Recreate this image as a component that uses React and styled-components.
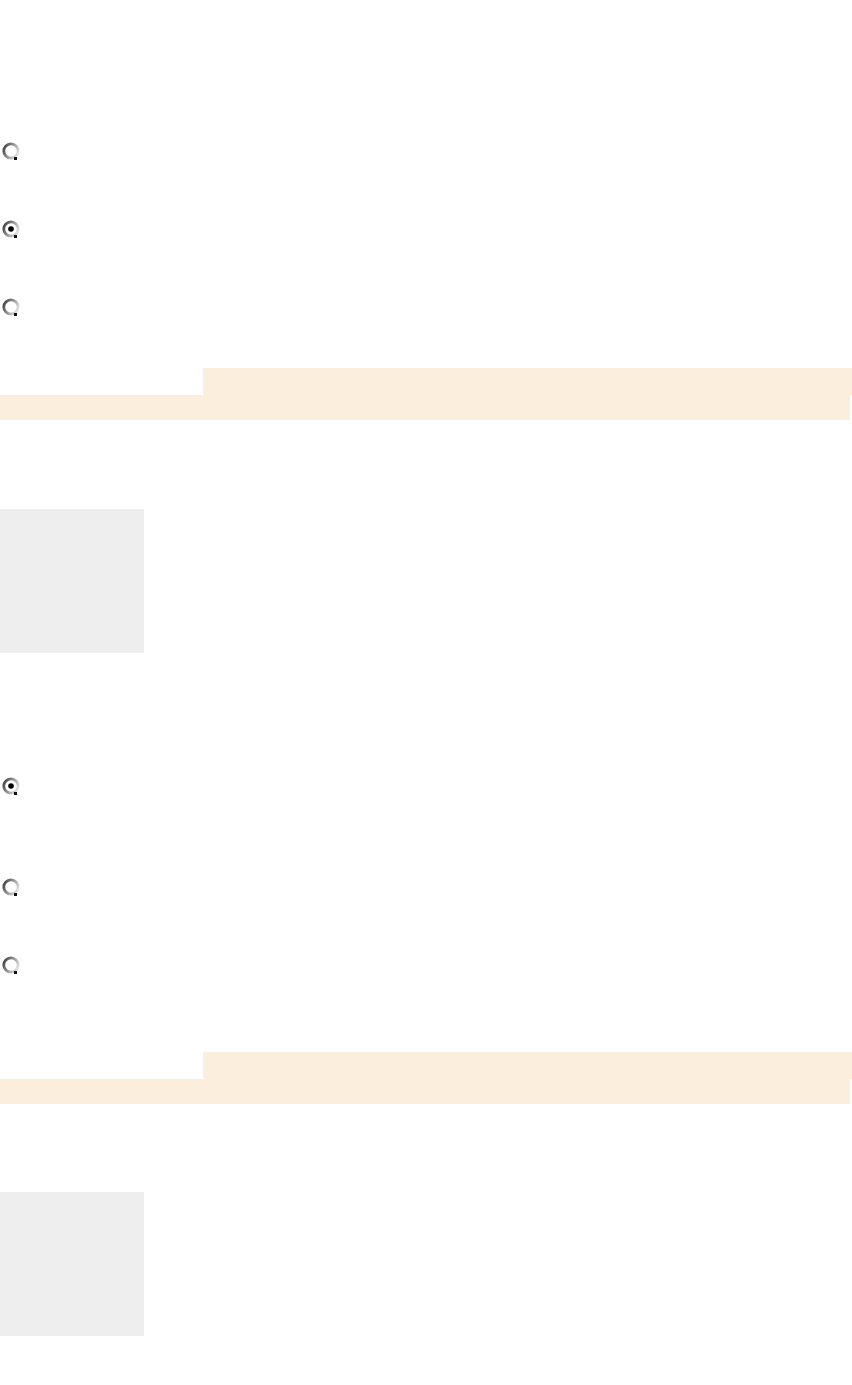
import React from "react";
import styled, { createGlobalStyle } from "styled-components";

const GlobalStyle = createGlobalStyle`
  html, body {
    margin: 0;
    padding: 0;
    background: #ffffff;
    font-family: "Liberation Sans", Arial, sans-serif;
  }
`;

const Page = styled.div`
  width: 852px;
  min-height: 1385px;
  background: #ffffff;
  display: flex;
  flex-direction: column;
`;

const Question = styled.section`
  display: flex;
  flex-direction: column;
  padding-top: ${(p) => p.$top}px;
`;

const OptionList = styled.div`
  display: flex;
  flex-direction: column;
`;

const OptionRow = styled.label`
  display: flex;
  align-items: flex-start;
  height: ${(p) => p.$h}px;
  padding-left: 1px;
  cursor: pointer;
`;

const RadioIcon = styled.svg`
  width: 20px;
  height: 20px;
  flex: none;
`;

const Banner = styled.div`
  display: flex;
  flex-direction: column;
  width: 852px;
`;

const BannerTab = styled.div`
  margin-left: 203px;
  height: 27px;
  background: #fbeedd;
`;

const BannerBar = styled.div`
  width: 850px;
  height: 25px;
  background: #fbeedd;
`;

const Thumb = styled.div`
  margin-top: ${(p) => p.$gap}px;
  width: 144px;
  height: 144px;
  background: #eeeeee;
`;

const Radio = ({ checked }) => (
  <RadioIcon viewBox="0 0 20 20">
    <defs>
      <linearGradient id="ring" x1="0" y1="0.2" x2="1" y2="0.7">
        <stop offset="0" stopColor="#444" />
        <stop offset="0.5" stopColor="#999" />
        <stop offset="1" stopColor="#e4e4e4" />
      </linearGradient>
    </defs>
    <circle cx="10" cy="10" r="7.2" fill="#fff" stroke="url(#ring)" strokeWidth="2.8" />
    <rect x="13" y="16" width="3" height="3" fill="#111" />
    {checked && <circle cx="10" cy="10" r="2.8" fill="#000" />}
  </RadioIcon>
);

const questions = [
  {
    top: 141,
    options: [
      { h: 78, checked: false },
      { h: 78, checked: true },
      { h: 71, checked: false },
    ],
    thumbGap: 89,
  },
  {
    top: 123,
    options: [
      { h: 101, checked: true },
      { h: 78, checked: false },
      { h: 97, checked: false },
    ],
    thumbGap: 88,
  },
];

export default function App() {
  return (
    <Page>
      <GlobalStyle />
      {questions.map((q, i) => (
        <Question key={i} $top={q.top}>
          <OptionList>
            {q.options.map((o, j) => (
              <OptionRow key={j} $h={o.h}>
                <Radio checked={o.checked} />
              </OptionRow>
            ))}
          </OptionList>
          <Banner>
            <BannerTab />
            <BannerBar />
          </Banner>
          <Thumb $gap={q.thumbGap} />
        </Question>
      ))}
    </Page>
  );
}
